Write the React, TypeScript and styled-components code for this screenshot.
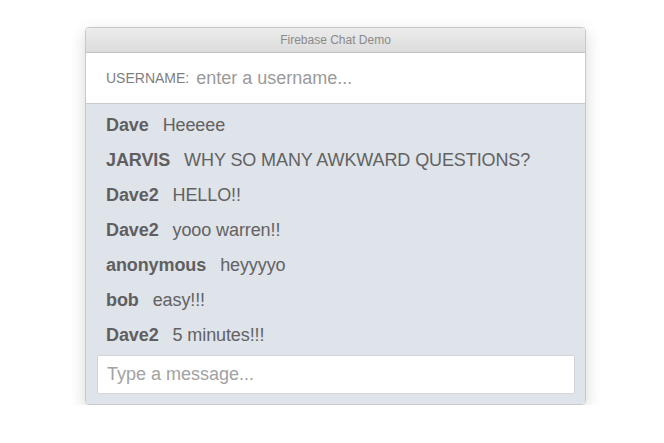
import React from 'react';
import styled, { createGlobalStyle } from 'styled-components';

const GlobalStyle = createGlobalStyle`
    body {
        margin:0;
        background:#fff;
        font-family:"Liberation Sans", Arial, sans-serif;
    }
`

const messages = [
    { name: 'Dave', text: 'Heeeee' },
    { name: 'JARVIS', text: 'WHY SO MANY AWKWARD QUESTIONS?' },
    { name: 'Dave2', text: 'HELLO!!' },
    { name: 'Dave2', text: 'yooo warren!!' },
    { name: 'anonymous', text: 'heyyyyo' },
    { name: 'bob', text: 'easy!!!' },
    { name: 'Dave2', text: '5 minutes!!!' },
]

function App() {
    return (
        <Page>
            <GlobalStyle />
            <ChatWindow>
                <TitleBar>Firebase Chat Demo</TitleBar>

                <UserRow>
                    <UserLabel>USERNAME:</UserLabel>
                    <UserInput placeholder="enter a username..." />
                </UserRow>

                <MessagesArea>
                    {messages.map((m, i) => (
                        <MessageRow key={i}>
                            <MessageName>{m.name}</MessageName>
                            <MessageText>{m.text}</MessageText>
                        </MessageRow>
                    ))}
                    <MessageInput placeholder="Type a message..." />
                </MessagesArea>
            </ChatWindow>
        </Page>
    )
}

export default App

const Page = styled.div`
    padding:27px 0 0 85px;
`

const ChatWindow = styled.div`
    width:501px;
    box-sizing:border-box;
    border:1px solid #c8c8c8;
    border-radius:4px;
    overflow:hidden;
    box-shadow:0 5px 16px rgba(0,0,0,0.16);
`

const TitleBar = styled.div`
    height:24px;
    line-height:24px;
    text-align:center;
    font-size:12px;
    color:#8a8a8a;
    background:linear-gradient(#ececec, #dcdcdc);
    border-bottom:1px solid #c4c4c4;
`

const UserRow = styled.div`
    display:flex;
    align-items:center;
    height:50px;
    padding:0 20px;
    background:#fff;
    border-bottom:1px solid #cacaca;
`

const UserLabel = styled.span`
    font-size:14px;
    color:#7e7e7e;
    margin-right:7px;
`

const UserInput = styled.input`
    flex:1;
    border:none;
    outline:none;
    padding:0;
    font-family:"Liberation Sans", Arial, sans-serif;
    font-size:18px;
    color:#555;
    &::placeholder {
        color:#9a9a9a;
    }
`

const MessagesArea = styled.div`
    background:#dfe3ea;
    padding:4px 10px 10px 11px;
`

const MessageRow = styled.div`
    display:flex;
    align-items:center;
    height:35px;
    padding-left:9px;
    font-size:18px;
    letter-spacing:-0.1px;
`

const MessageName = styled.span`
    font-weight:bold;
    color:#5f5f5f;
    margin-right:14px;
`

const MessageText = styled.span`
    color:#626262;
`

const MessageInput = styled.input`
    display:block;
    width:100%;
    box-sizing:border-box;
    height:39px;
    margin-top:2px;
    padding:0 9px;
    border:1px solid #d2d5db;
    border-radius:2px;
    outline:none;
    background:#fff;
    font-family:"Liberation Sans", Arial, sans-serif;
    font-size:18px;
    color:#555;
    &::placeholder {
        color:#a2a2a2;
    }
`
